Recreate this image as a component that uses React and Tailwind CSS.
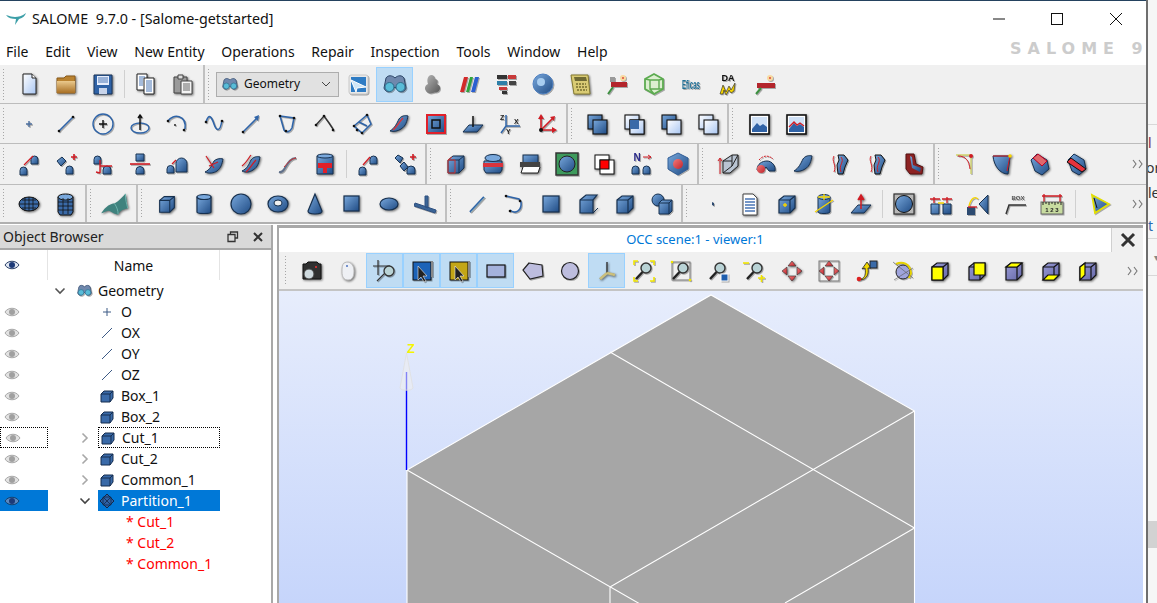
import React from 'react';

const dk = '#16304f';

const Ic = ({ s = 24, flat, children }) => (
    <svg width={s} height={s} viewBox="0 0 24 24" className={flat ? 'block drop-shadow-[1px_1px_0.5px_rgba(0,0,0,0.3)]' : 'block drop-shadow-[1px_1px_1px_rgba(0,0,0,0.55)]'}>
        {children}
    </svg>
);

// shared gradients, referenced by every icon
const Defs = () => (
    <svg width="0" height="0" className="block h-0 w-0">
        <defs>
            <linearGradient id="b" x1="0" y1="0" x2="1" y2="1"><stop offset="0" stopColor="#79a8dc" /><stop offset="1" stopColor="#1f4b84" /></linearGradient>
            <linearGradient id="doc" x1="0" y1="0" x2="1" y2="1"><stop offset="0" stopColor="#ffffff" /><stop offset="1" stopColor="#a9c6f2" /></linearGradient>
            <linearGradient id="tan" x1="0" y1="0" x2="0" y2="1"><stop offset="0" stopColor="#eac98d" /><stop offset="1" stopColor="#a86f24" /></linearGradient>
            <linearGradient id="red" x1="0" y1="0" x2="1" y2="1"><stop offset="0" stopColor="#f27a7a" /><stop offset="1" stopColor="#c0242c" /></linearGradient>
            <linearGradient id="gr" x1="0" y1="0" x2="1" y2="1"><stop offset="0" stopColor="#b8b8b8" /><stop offset="1" stopColor="#555555" /></linearGradient>
            <linearGradient id="vi" x1="0" y1="0" x2="1" y2="1"><stop offset="0" stopColor="#9a9cd6" /><stop offset="1" stopColor="#6567a8" /></linearGradient>
        </defs>
    </svg>
);

const Dot = ({ x, y, r = 1.3, c = '#111' }) => <circle cx={x} cy={y} r={r} fill={c} />;
const Blob = ({ x, y, w = 7, h = 9 }) => <path d={`M${x} ${y + h}v-${h / 2}a${w / 2} ${w / 2} 0 0 1 ${w} 0v${h / 2}z`} fill="url(#b)" stroke={dk} />;
const Cube = ({ f = 'url(#b)', top, side, st = dk, inner }) => (
    <g stroke={st} strokeWidth="1.2">
        <path d="M4 8l5-4h11v12l-5 5H4z" fill={f} />
        {top && <path d="M4 8l5-4h11l-5 4z" fill={top} />}
        {side && <path d="M15 8l5-4v12l-5 5z" fill={side} />}
        <path d="M4 8h11v13M15 8l5-4" fill="none" />
        {inner}
    </g>
);
const Line = ({ d, c = '#2f64a8', w = 1.6 }) => <path d={d} fill="none" stroke={c} strokeWidth={w} />;
const Squares = ({ a = 'url(#b)', b = 'url(#b)' }) => (
    <g stroke="#111" strokeWidth="1.1">
        <rect x="3" y="3" width="14" height="14" fill={a} />
        <rect x="8" y="8" width="14" height="14" fill={b} />
    </g>
);
const Scope = () => (
    <g>
        <circle cx="14" cy="9" r="5" fill="#b9d3d6" stroke="#333" strokeWidth="1.4" />
        <path d="M10.5 13L4 20" stroke="#222" strokeWidth="2.4" />
    </g>
);
const Arrows = () => (
    <g fill="url(#red)" stroke="#333" strokeWidth=".6">
        <path d="M12 2l4 5h-8z" /><path d="M12 22l4-5h-8z" /><path d="M2 12l5-4v8z" /><path d="M22 12l-5-4v8z" />
    </g>
);
const GeomLogo = ({ s = 24 }) => (
    <Ic s={s} flat>
        <path d="M3 6c2-3 6-3 9 0 3-3 7-3 9 0l2 10c-1 4-6 5-8 2l-3-3-3 3c-2 3-7 2-8-2z" fill="#6f88ad" stroke="#2b4466" />
        <circle cx="6.500" cy="15" r="4.500" fill="#58bcd8" stroke="#2f6a88" />
        <circle cx="17.500" cy="15" r="4.500" fill="#58bcd8" stroke="#2f6a88" />
    </Ic>
);

const I = {
    new: <Ic><path d="M6 2h9l4 4v16H6z" fill="url(#doc)" stroke="#222" /><path d="M15 2v4h4" fill="#fff" stroke="#222" /></Ic>,
    open: <Ic><path d="M3 6h7l2-2h9v17H3z" fill="#b98230" stroke="#8a5a1a" /><path d="M3 9h18v12H3z" fill="url(#tan)" /></Ic>,
    save: <Ic><path d="M3 3h18v19H3z" fill="#2f62a6" stroke="#1b3558" /><rect x="6" y="4" width="12" height="9" fill="#e7eefc" /><path d="M7 6h10M7 8h10M7 10h10" stroke="#4a76b5" /><rect x="8" y="16" width="8" height="6" fill="#c8d4ea" /></Ic>,
    copy: <Ic><path d="M3 2h10v16H3z" fill="#fff" stroke="#222" /><path d="M10 6h10v16H10z" fill="#fff" stroke="#222" /><path d="M12 9h6M12 11h6M12 13h6M12 15h6M12 17h6M12 19h6" stroke="#4a76b5" /><path d="M5 5h6M5 7h4M5 9h4M5 11h4M5 13h4" stroke="#4a76b5" /></Ic>,
    paste: <Ic><path d="M3 5h13v16H3z" fill="#9a9a9a" stroke="#444" /><path d="M7 3h5v4H7z" fill="#ddd" stroke="#444" /><path d="M10 9h11v13H10z" fill="#f4f4f4" stroke="#444" /><path d="M12 12h7M12 14h7M12 16h7M12 18h7" stroke="#666" /></Ic>,
    shaper: <Ic flat><rect x="3" y="3" width="19" height="19" rx="2" fill="#e8e8e8" stroke="#c8c8c8" /><rect x="5" y="5" width="15" height="15" fill="#2f7cc4" /><path d="M5 8l15 7-9 1-1 4z" fill="#cfe6f7" stroke="#fff" /></Ic>,
    geom: <GeomLogo />,
    smesh: <Ic flat><path d="M9 4c2-2 6-1 6 3 3 0 3 3 2 5 3 1 4 4 2 7-2 2-4 1-6 2-3 1-6 0-7-2-2-2-1-6 2-7-1-2-1-6 1-8z" fill="url(#gr)" /></Ic>,
    para: <Ic flat><path d="M3 20L7 5h4L7 20z" fill="#d22a2a" /><path d="M9 20l4-15h3l-4 15z" fill="#2fa33c" /><path d="M14 20l4-15h4l-4 15z" fill="#2b5fd0" /></Ic>,
    yacs: <Ic flat><rect x="3" y="3" width="10" height="4" fill="#333" /><rect x="14" y="3" width="8" height="4" fill="#c83a3a" /><rect x="3" y="9" width="10" height="4" fill="#2e7fa8" /><rect x="15" y="9" width="7" height="4" fill="#444" /><rect x="5" y="15" width="8" height="3" fill="#c83a3a" /><rect x="8" y="19" width="5" height="3" fill="#333" /></Ic>,
    globe: <Ic flat><circle cx="12" cy="12" r="10" fill="url(#b)" stroke="#4d7fc0" /><circle cx="10" cy="10" r="4" fill="#a8cdf0" /></Ic>,
    calc: <Ic><path d="M3 3h17l2 19H6z" fill="#d9cb74" stroke="#847a30" /><path d="M6 5h12l1 4H7z" fill="#6f6a34" /><path d="M8 12h10M8 15h11M9 18h10" stroke="#8f8540" strokeDasharray="2 1" strokeWidth="2" /></Ic>,
    field: <Ic flat><path d="M6 10h16v5H6z" fill="#b3252c" /><path d="M5 5h5v5H5z" fill="#999" /><path d="M8 15L3 22" stroke="#3c9040" strokeWidth="2" /><circle cx="18" cy="6" r="3" fill="#f7d9a0" /><circle cx="18" cy="6" r="1" fill="#e24a3a" /></Ic>,
    wire: <Ic flat><path d="M12 2l9 5v10l-9 5-9-5V7z" fill="#dcefd0" stroke="#5cab50" strokeWidth="1.8" /><path d="M8 8h9v9H8zM3 7l5 1M21 17l-4 0M8 17l4 5M17 8l4-1" fill="none" stroke="#5cab50" strokeWidth="1.4" /></Ic>,
    eficas: <Ic flat><text x="3" y="17" fontFamily="'Liberation Sans',sans-serif" fontSize="12" fontWeight="700" fill="#1f6f96" textLength="18" lengthAdjust="spacingAndGlyphs">Eficas</text></Ic>,
    dna: <Ic flat><text x="12" y="9" textAnchor="middle" fontFamily="'Liberation Sans',sans-serif" fontSize="9" fontWeight="700" fill="#111">DA</text><path d="M4 22l3-9 3 7 3-6 2 4 4-7-1 8-3 2-2-3-3 5-2-5-1 4z" fill="#f6d500" stroke="#222" strokeWidth=".6" /></Ic>,
    field2: <Ic flat><path d="M4 11h18v5H4z" fill="#b3252c" /><path d="M8 16L3 22" stroke="#3c9040" strokeWidth="2" /><circle cx="17" cy="6" r="3" fill="#f7d9a0" /><circle cx="17" cy="6" r="1" fill="#e24a3a" /></Ic>,

    point: <Ic flat><path d="M12 9v6M9 12h6" stroke="#4c6f9f" strokeWidth="1.4" /></Ic>,
    line: <Ic flat><Line d="M5 19L19 5" /><Dot x={5} y={19} /><Dot x={19} y={5} /></Ic>,
    circle: <Ic flat><circle cx="12" cy="12" r="10" fill="none" stroke="#2f64a8" strokeWidth="1.4" /><path d="M12 8v8M8 12h8" stroke="#111" strokeWidth="1.4" /></Ic>,
    ellipse: <Ic flat><ellipse cx="12" cy="16" rx="9" ry="5" fill="none" stroke="#2f64a8" strokeWidth="1.4" /><path d="M12 4v14M10 6l2-3 2 3" fill="none" stroke="#111" strokeWidth="1.4" /></Ic>,
    arc: <Ic flat><Line d="M3 9C8 1 22 3 20 17" /><Dot x={3} y={9} /><Dot x={19} y={18} /><Dot x={10} y={13} r={.9} /></Ic>,
    spline: <Ic flat><Line d="M4 10C7 0 10 6 12 12s6 10 8-4" /><Dot x={4} y={10} /><Dot x={20} y={9} /></Ic>,
    vector: <Ic flat><Line d="M4 20L19 5" /><path d="M20 3l-1 6-4-4z" fill="#2f64a8" /><Dot x={4} y={20} /></Ic>,
    wire1: <Ic flat><Line d="M4 4l14 2-2 10c-2 4-6 5-8 2z" /><Dot x={4} y={4} /><Dot x={18} y={6} /><Dot x={10} y={19} /></Ic>,
    poly: <Ic flat><path d="M3 13l8-9 5 7 4 6" fill="none" stroke="#333" strokeWidth="1.4" /><Dot x={3} y={13} /><Dot x={11} y={4} /><Dot x={20} y={18} /></Ic>,
    sketch: <Ic flat><Line d="M4 14L17 3l4 9-9 9zM9 10l8 4" /><Dot x={4} y={14} /><Dot x={17} y={3} /><Dot x={12} y={21} /><Dot x={7} y={18} /></Ic>,
    surf: <Ic><path d="M3 19c5-3 7-8 9-12 2-3 6-4 9-3-1 5-2 10-7 13-3 2-7 3-11 2z" fill="url(#b)" stroke={dk} /><path d="M6 18c4-3 6-8 10-12" stroke="#d8333c" fill="none" strokeWidth="1.4" /></Ic>,
    face: <Ic flat><rect x="3" y="3" width="18" height="18" fill="url(#b)" stroke="#e0202a" strokeWidth="2" /><rect x="8" y="8" width="8" height="8" fill="none" stroke="#111" strokeWidth="1.5" /></Ic>,
    plane: <Ic><path d="M2 20l6-7h14l-6 7z" fill="url(#b)" stroke={dk} /><path d="M12 4v11" stroke="#111" strokeWidth="1.5" /></Ic>,
    lcs: <Ic flat><path d="M8 14V3M8 14h14M8 14L3 21" stroke="#2f64a8" strokeWidth="1.5" /><text x="2" y="8" fontSize="7" fontFamily="'Liberation Sans',sans-serif" fontWeight="700" fill="#222">Z</text><text x="16" y="12" fontSize="7" fontFamily="'Liberation Sans',sans-serif" fontWeight="700" fill="#222">X</text><text x="8" y="22" fontSize="7" fontFamily="'Liberation Sans',sans-serif" fontWeight="700" fill="#222">Y</text></Ic>,
    axes: <Ic flat><path d="M6 18V5M6 18h14M6 18L18 6" stroke="#d01c24" strokeWidth="1.6" fill="none" /><path d="M6 2l-3 5h6zM22 18l-5-3v6zM20 4l-5 1 4 4z" fill="#d01c24" /><Dot x={6} y={18} r={2} /></Ic>,
    fuse: <Ic><Squares /></Ic>,
    common: <Ic><Squares a="url(#doc)" b="url(#b)" /><rect x="8" y="8" width="14" height="14" fill="url(#doc)" stroke="#111" /><rect x="8" y="8" width="9" height="9" fill="#3a6aa8" /></Ic>,
    cut: <Ic><Squares a="url(#b)" b="url(#doc)" /></Ic>,
    sect: <Ic><Squares a="url(#doc)" b="url(#doc)" /></Ic>,
    pic1: <Ic><rect x="3" y="3" width="19" height="19" fill="#fff" stroke="#111" strokeWidth="1.6" /><rect x="5" y="5" width="15" height="15" fill="#cfe0f5" /><path d="M5 17l5-6 3 3 3-2 4 3v5H5z" fill="#2f62a6" /></Ic>,
    pic2: <Ic><rect x="3" y="3" width="19" height="19" fill="#fff" stroke="#111" strokeWidth="1.6" /><rect x="5" y="5" width="15" height="15" fill="#cfe0f5" /><path d="M5 17l5-6 3 3 3-2 4 3v5H5z" fill="#2f62a6" /><path d="M5 15l5-5 3 3 3-2 4 3" stroke="#d01c24" fill="none" strokeWidth="1.4" /></Ic>,

    move: <Ic flat><Blob x={3} y={14} /><Blob x={14} y={3} /><path d="M7 13L16 4" stroke="#d01c24" strokeWidth="1.2" /></Ic>,
    scale: <Ic flat><path d="M3 9l5-4 4 4-5 5z" fill="url(#b)" stroke={dk} /><Blob x={12} y={13} /><path d="M17 5h6M20 2v6" stroke="#d01c24" strokeWidth="1.6" /></Ic>,
    rota: <Ic flat><Blob x={3} y={3} /><Blob x={12} y={14} w={8} h={8} /><path d="M9 14h12M9 8v13M5 20l4 1" stroke="#d01c24" strokeWidth="1.4" fill="none" /></Ic>,
    mirror: <Ic flat><path d="M8 2h8v7H8z" fill="url(#b)" stroke={dk} /><path d="M2 12h20" stroke="#d01c24" strokeWidth="1.6" /><Blob x={8} y={15} w={8} h={7} /></Ic>,
    offs: <Ic flat><Blob x={2} y={13} w={7} h={8} /><Blob x={11} y={3} w={11} h={17} /><path d="M7 12l4-4" stroke="#d01c24" strokeWidth="1.2" /></Ic>,
    proj: <Ic><path d="M3 20c5-2 7-7 9-11 2-2 6-3 9-2-1 5-2 9-6 12-3 2-8 3-12 1z" fill="url(#b)" stroke={dk} /><path d="M4 4l8 12M7 14l9-4" stroke="#d01c24" fill="none" strokeWidth="1.2" /></Ic>,
    extr: <Ic><path d="M3 19c5-2 7-7 9-11 2-3 6-4 9-3-1 5-2 10-7 13-3 2-7 3-11 1z" fill="url(#b)" stroke={dk} /><path d="M3 14c4-3 6-7 9-11M7 20c4-3 6-8 10-12" stroke="#d01c24" fill="none" strokeWidth="1.2" /></Ic>,
    curve: <Ic flat><path d="M3 20c7 2 7-14 17-14" fill="none" stroke="#60708a" strokeWidth="2" /><path d="M8 15c3-3 6-8 12-9" fill="none" stroke="#c33" strokeWidth="1" /></Ic>,
    drum: <Ic><path d="M4 4h16v18H4z" fill="url(#b)" stroke={dk} /><ellipse cx="12" cy="4" rx="8" ry="2" fill="#79a8dc" stroke={dk} /><path d="M5 11h14v5h-5v5h-4v-5H5z" fill="#e0202a" /></Ic>,
    move2: <Ic flat><Blob x={3} y={14} /><Blob x={14} y={3} /><path d="M7 13L14 5" stroke="#d01c24" strokeWidth="1.4" /></Ic>,
    multi: <Ic flat><path d="M2 6l3-3 5 3-3 5z" fill="url(#b)" stroke={dk} /><path d="M7 14l4-4 4 5-4 4z" fill="url(#b)" stroke={dk} /><Blob x={14} y={14} w={8} h={8} /><path d="M17 5h6M20 2v6" stroke="#d01c24" strokeWidth="1.6" /></Ic>,
    ccube: <Ic><path d="M4 8l5-4h11v12l-5 5H4z" fill="url(#b)" stroke={dk} /><path d="M4 8h11v13M15 8l5-4" stroke={dk} fill="none" /><path d="M4 8h7v13H4zM4 8l4-3" stroke="#c33" fill="none" /></Ic>,
    cfuse: <Ic><path d="M3 9h18v9l-2 3H5l-2-3z" fill="url(#b)" stroke={dk} /><ellipse cx="12" cy="6" rx="8" ry="3.5" fill="#79a8dc" stroke={dk} /><rect x="2" y="11" width="20" height="4" fill="#d8333c" /></Ic>,
    cut3: <Ic><rect x="5" y="3" width="15" height="10" fill="url(#b)" stroke={dk} /><rect x="2" y="10" width="20" height="5" fill="#444" /><path d="M5 15l-2 6h17l2-6" fill="#fff" stroke="#222" /></Ic>,
    glue: <Ic flat><rect x="1" y="1" width="22" height="22" fill="#3d9a5c" stroke="#333" strokeWidth="1.5" /><circle cx="12" cy="12" r="8" fill="url(#b)" stroke="#222" /></Ic>,
    sqred: <Ic><rect x="3" y="3" width="14" height="14" fill="#fff" stroke="#111" /><rect x="8" y="8" width="14" height="14" fill="#fff" stroke="#111" /><rect x="8" y="8" width="9" height="9" fill="#ff0000" stroke="#111" /></Ic>,
    normal: <Ic flat><text x="8" y="9" fontSize="10" fontFamily="'Liberation Sans',sans-serif" fontWeight="700" textAnchor="middle" fill="#2c2c8c">N</text><path d="M14 5h8M19 3l3 2-3 2" stroke="#d01c24" fill="none" /><Blob x={3} y={13} w={7} h={9} /><Blob x={14} y={13} w={7} h={9} /></Ic>,
    hex: <Ic flat><path d="M12 1l10 5v11l-10 6L2 17V6z" fill="url(#b)" stroke="#315e97" /><circle cx="12" cy="12" r="5" fill="url(#red)" /></Ic>,
    split: <Ic><path d="M6 9l9-6h6v11l-8 7H6z" fill="#b9c4d2" stroke="#222" /><path d="M6 9h9M15 3v11l-9 7M15 14l6-11" stroke="#222" fill="none" /><path d="M3 22V7M1 9l2-3 2 3" stroke="#d01c24" fill="none" /></Ic>,
    chull: <Ic flat><path d="M3 18c0-6 5-9 10-9s9 5 8 10h-6l-3-4-3 4z" fill="url(#b)" stroke={dk} /><circle cx="7" cy="17" r="4" fill="url(#red)" /><path d="M5 8c4-5 10-5 14-1" stroke="#d01c24" fill="none" strokeDasharray="2 1" /></Ic>,
    shell: <Ic><path d="M3 19c5-3 7-8 9-12 2-3 6-4 9-3-1 5-2 10-7 13-3 2-7 3-11 2z" fill="url(#b)" stroke={dk} /></Ic>,
    tube: <Ic flat><path d="M10 3h6l4 5-3 7-2 7h-5l-1-9 2-5z" fill="url(#b)" stroke="#111" /><path d="M13 5c4 5-3 8 0 15" stroke="#d01c24" fill="none" /><path d="M6 4c-3 5 3 9 0 16" stroke="#d01c24" fill="none" /></Ic>,
    l: <Ic><path d="M4 2h8l2 10 7 3-1 7-12 0-4-5z" fill="#8d2222" stroke="#511" /><path d="M8 4l2 12 8 4 1-4-8-3-1-8z" fill="url(#b)" /></Ic>,
    fillet: <Ic flat><path d="M3 3h15c0 8 0 12 0 19" fill="none" stroke="#cfd26a" strokeWidth="1.4" /><path d="M5 4c8 0 11 5 12 13" fill="none" stroke="#d01c24" /><Dot x={18} y={4} r={2} c="#d01c24" /></Ic>,
    fil3d: <Ic><path d="M3 4h17l-2 18c-8 0-14-8-15-18z" fill="url(#b)" stroke={dk} /><path d="M3 4h16M20 4l-3 15" stroke="#d01c24" /><Dot x={20} y={4} r={1.8} c="#f6d500" /></Ic>,
    cham: <Ic><path d="M4 8l6-6 10 6 2 9-7 6-7-4z" fill="url(#b)" stroke={dk} /><path d="M6 6l5-4 9 7-5 5z" fill="#e0686c" stroke="#b02" /></Ic>,
    cham2: <Ic><path d="M4 8l6-6 10 6 2 9-7 6-7-4z" fill="url(#b)" stroke={dk} /><path d="M3 10l4-4 15 11-4 3z" fill="#e6323c" stroke="#111" /></Ic>,

    sphere2: <Ic><ellipse cx="12" cy="12" rx="10" ry="7" fill="#3a6aa8" stroke="#111" /><path d="M2 12h20M5 8h14M5 16h14M8 5v14M12 5v14M16 5v14" stroke="#111" strokeWidth=".8" /></Ic>,
    cyl2: <Ic><path d="M4 5h15v15l-2 3H6l-2-3z" fill="#3a6aa8" stroke="#111" /><ellipse cx="11.5" cy="5" rx="7.5" ry="3" fill="#79a8dc" stroke="#111" /><path d="M4 10h15M4 14h15M4 18h15M9 6v16M14 6v16" stroke="#111" strokeWidth=".8" /></Ic>,
    wave: <Ic s={29}><path d="M1 20c4-6 8-8 11-8 4-2 7-6 9-8 1 3 1 7 2 12-4 1-6 2-8 5-4 0-6-3-8-3-2 0-4 2-6 2z" fill="#3f827e" /><path d="M12 12c2 3 3 6 3 9M21 4c0 5 1 8 2 12" stroke="#6fb3ad" fill="none" strokeWidth=".8" /></Ic>,
    box: <Ic s={22}><Cube /></Ic>,
    cyl: <Ic><path d="M5 5v15c0 2 14 2 14 0V5z" fill="url(#b)" stroke={dk} strokeWidth="1.2" /><ellipse cx="12" cy="5" rx="7" ry="2.5" fill="#79a8dc" stroke={dk} strokeWidth="1.2" /></Ic>,
    sphere: <Ic><circle cx="12" cy="12" r="10" fill="url(#b)" stroke={dk} strokeWidth="1.2" /></Ic>,
    torus: <Ic><ellipse cx="12" cy="12" rx="10" ry="8" fill="url(#b)" stroke={dk} strokeWidth="1.2" /><ellipse cx="12" cy="11" rx="4" ry="3" fill="#f0f0f0" stroke={dk} /></Ic>,
    cone: <Ic><path d="M12 2L5 19c0 4 14 4 14 0z" fill="url(#b)" stroke={dk} strokeWidth="1.2" /></Ic>,
    rect: <Ic><rect x="4" y="4" width="15" height="15" fill="url(#b)" stroke={dk} strokeWidth="1.2" /></Ic>,
    disk: <Ic><ellipse cx="12" cy="12" rx="9" ry="6" fill="url(#b)" stroke={dk} strokeWidth="1.2" /></Ic>,
    tee: <Ic flat><path d="M1 11l21 7-1 3-9-3-6-2-6-2zM11 15V4h3v12z" fill="#3a6496" stroke="#2e5080" /></Ic>,
    edge: <Ic flat><path d="M5 20L19 5" stroke="#2f64a8" strokeWidth="2" /><path d="M6 20L20 5" stroke="#9bb" strokeWidth=".8" /></Ic>,
    wire2: <Ic flat><Line d="M4 4l13 3 2 3c1 8-5 13-11 8" /><Dot x={4} y={4} /><Dot x={18} y={9} /><Dot x={8} y={19} /></Ic>,
    face2: <Ic><rect x="4" y="4" width="16" height="16" fill="url(#b)" stroke={dk} strokeWidth="1.2" /></Ic>,
    shellc: <Ic><path d="M4 8l6-5h11l-4 5v13l-13 0z" fill="url(#b)" stroke={dk} strokeWidth="1.2" /><path d="M4 8h13M22 16l-5 5" stroke={dk} /></Ic>,
    solid: <Ic><Cube /></Ic>,
    comp: <Ic flat><circle cx="8" cy="8" r="6" fill="url(#b)" stroke={dk} /><path d="M9 11l3-3h10v11l-3 3H9z" fill="url(#b)" stroke={dk} /><path d="M9 11h10v11M19 11l3-3" fill="none" stroke={dk} /></Ic>,
    tiny: <Ic flat><path d="M11 10l2 1v3l-2-1z" fill="#2c4a70" /></Ic>,
    list: <Ic><path d="M5 2h10l4 4v17H5z" fill="#fff" stroke="#444" /><path d="M7 7h10M7 10h10M7 13h10M7 16h10M7 19h10" stroke="#4a76b5" strokeWidth="1.4" /></Ic>,
    boxpt: <Ic><Cube inner={<path d="M8 13h4M10 11v4" stroke="#f6d500" strokeWidth="1.4" />} /></Ic>,
    cylax: <Ic flat><path d="M6 5v15c0 2 12 2 12 0V5z" fill="url(#b)" stroke={dk} /><ellipse cx="12" cy="5" rx="6" ry="2.5" fill="#79a8dc" stroke={dk} /><path d="M3 20L21 8M6 5h12M12 2v6" stroke="#f6d500" strokeWidth="1.3" /></Ic>,
    planear: <Ic><path d="M2 21l7-8h13l-7 8z" fill="url(#b)" stroke={dk} /><path d="M12 17V4M9 8l3-5 3 5" stroke="#d01c24" strokeWidth="1.5" fill="#d01c24" /></Ic>,
    insp: <Ic><rect x="2" y="2" width="20" height="20" fill="#b8b8b8" stroke="#333" strokeWidth="1.2" /><circle cx="12" cy="12" r="8.5" fill="url(#b)" stroke="#111" /></Ic>,
    dist: <Ic flat><path d="M2 12h8v10H2zM14 12h8v10h-8z" fill="url(#b)" stroke={dk} /><path d="M1 7h10M13 7h10M5 5v6M18 5v6" stroke="#d01c24" strokeWidth="1.3" /><path d="M9 11h6" stroke="#f6d500" strokeWidth="1.5" /></Ic>,
    angle: <Ic flat><path d="M1 15h8v8H1z" fill="#2c4a70" /><path d="M13 12L22 3v19z" fill="url(#b)" stroke={dk} /><path d="M3 14c2-8 6-10 9-7" stroke="#f6d500" fill="none" strokeWidth="1.4" /><path d="M2 15h9" stroke="#d01c24" strokeWidth="1.4" /></Ic>,
    boxdim: <Ic flat><text x="15" y="8" fontSize="6" fontFamily="'Liberation Sans',sans-serif" fontWeight="700" textAnchor="middle" fill="#555">BOX</text><path d="M3 22l3-9h17" stroke="#333" strokeWidth="1.5" fill="none" /></Ic>,
    ruler: <Ic flat><path d="M2 4h20M4 2v10M20 2v10" stroke="#d01c24" strokeWidth="1.3" /><rect x="1" y="10" width="22" height="12" fill="#c8dca0" stroke="#666" /><path d="M3 10v3M6 10v2M9 10v3M12 10v2M15 10v3M18 10v2M21 10v3" stroke="#222" /><text x="12" y="20" fontSize="6" fontFamily="'Liberation Sans',sans-serif" fontWeight="700" textAnchor="middle" fill="#222">1 2 3</text></Ic>,
    tri: <Ic flat><path d="M5 3l17 9-14 9z" fill="url(#b)" stroke="#e3e000" strokeWidth="1.8" /><path d="M7 6l3 10" stroke="#111" /></Ic>,

    cam: <Ic><path d="M4 5h3l2-2h9l2 2h2v15H4z" fill="#303030" stroke="#111" /><circle cx="10" cy="15" r="5" fill="#cfdadf" stroke="#444" /><circle cx="17" cy="8" r="1" fill="#e33" /></Ic>,
    mouse: <Ic><path d="M8 4c6-3 10 2 10 8s-2 9-6 9-6-3-6-8c0-4 0-7 2-9z" fill="#eef0f4" stroke="#bbb" /><circle cx="11" cy="7" r="1" fill="#4c72c0" /></Ic>,
    zoomr: <Ic flat><path d="M0 7h17M5 1v15M4 22L14 12" stroke="#333" strokeWidth="1.2" fill="none" /><circle cx="16" cy="12" r="5" fill="#b9d3d6" stroke="#333" strokeWidth="1.3" /></Ic>,
    selb: <Ic flat><rect x="3" y="3" width="18" height="18" fill="#1c63b8" stroke="#111" /><path d="M21 2h2v16h-2" fill="#888" /><path d="M8 7v14l3-3 3 5 2-1-3-5h4z" fill="#222" stroke="#eee" strokeWidth=".6" /></Ic>,
    sely: <Ic flat><rect x="3" y="3" width="18" height="18" fill="#c3a616" stroke="#111" /><path d="M21 2h2v16h-2" fill="#888" /><path d="M8 7v14l3-3 3 5 2-1-3-5h4z" fill="#222" stroke="#eee" strokeWidth=".6" /></Ic>,
    srect: <Ic flat><rect x="3" y="6" width="18" height="12" fill="#a4b2dc" stroke="#111" strokeWidth="1.2" /></Ic>,
    spoly: <Ic flat><path d="M8 4l13 2 1 11-13 3-7-9z" fill="#bdbdde" stroke="#222" strokeWidth="1.2" /></Ic>,
    scirc: <Ic flat><circle cx="12" cy="12" r="8.5" fill="#bdbdde" stroke="#222" strokeWidth="1.2" /></Ic>,
    trihedron: <Ic><path d="M12 14V3M12 14l8 2M12 14l-7 6" stroke="#333" strokeWidth="1.4" /><path d="M12 14l8 2M12 14l-7 6" stroke="#cbbf7c" strokeWidth="2.4" /></Ic>,
    zfit: <Ic flat><path d="M2 6V2h4M22 6V2h-4M2 18v4h4M22 18v4h-4" stroke="#f2e600" strokeWidth="1.6" fill="none" /><Scope /></Ic>,
    zarea: <Ic flat><rect x="3" y="3" width="18" height="18" fill="none" stroke="#777" /><Scope /><Dot x={3} y={3} c="#f2e600" /><Dot x={21} y={21} c="#f2e600" /></Ic>,
    zobj: <Ic flat><Scope /><rect x="15" y="15" width="7" height="7" fill="#1f5fae" stroke="#fff" /></Ic>,
    zoom: <Ic flat><path d="M0 4h6" stroke="#f2e600" strokeWidth="1.6" /><Scope /><path d="M15 19h7M18.500 16v7" stroke="#f2e600" strokeWidth="1.6" /></Ic>,
    pan: <Ic><Arrows /></Ic>,
    pan2: <Ic flat><rect x="2" y="2" width="20" height="20" fill="none" stroke="#777" /><Arrows /></Ic>,
    rotv: <Ic flat><path d="M7 20c4-1 5-5 4-11l-3 1 5-7 4 6-3 0c1 6-1 11-7 12z" fill="#f2d800" stroke="#222" strokeWidth=".8" /><Dot x={5} y={20} r={2.3} c="#d22" /><rect x="16" y="2" width="7" height="7" fill="#3a6aa8" stroke="#222" /></Ic>,
    rots: <Ic flat><circle cx="12" cy="13" r="7" fill="#9fa4dc" stroke="#222" /><path d="M5 5c6-3 14-1 15 9l-2 5" stroke="#e6d200" strokeWidth="2" fill="none" /><path d="M2 3l20 16M22 9L3 21" stroke="#555" strokeWidth=".6" /></Ic>,
    vfront: <Ic><Cube f="url(#vi)" inner={<rect x="4" y="8" width="11" height="13" fill="#ffff00" stroke="#111" />} st="#111" /></Ic>,
    vback: <Ic><Cube f="url(#vi)" inner={<path d="M9 4h11v12H9z" fill="#ffff00" stroke="#111" />} st="#111" /></Ic>,
    vtop: <Ic><Cube f="url(#vi)" inner={<path d="M4 8l5-4h11l-5 4z" fill="#ffff00" />} st="#111" /></Ic>,
    vbot: <Ic><Cube f="url(#vi)" inner={<path d="M4 21l5-5h11l-5 5z" fill="#ffff00" />} st="#111" /></Ic>,
    vleft: <Ic><Cube f="url(#vi)" inner={<path d="M4 8l5-4v12l-5 5z" fill="#ffff00" />} st="#111" /></Ic>,
};

const Grip = ({ w = 'w-[10px]' }) => (
    <div className={`${w} shrink-0 self-stretch py-[3px] pl-[2px]`}>
        <div className="h-full w-[3px] bg-[radial-gradient(#a6a6a6_1px,transparent_1px)] bg-[length:3px_3px]" />
    </div>
);

const Cell = ({ name }) => {
    const on = name.endsWith('!');
    const icon = I[on ? name.slice(0, -1) : name];
    return (
        <div className={`flex h-[35px] w-[37px] shrink-0 items-center justify-center ${on ? 'border border-[#99d1ff] bg-[#bfdcf3]' : ''}`}>
            {icon}
        </div>
    );
};

const ThinSep = ({ w = 'w-[6px]' }) => (
    <div className={`${w} flex shrink-0 justify-center`}>
        <div className="h-[28px] w-px bg-[#d0d0d0]" />
    </div>
);

const Items = ({ list }) => list.map((n, i) => {
    if (n === '|') return <ThinSep key={i} />;
    if (n === '|w') return <ThinSep key={i} w="w-[10px]" />;
    return <Cell key={i} name={n} />;
});

const Group = ({ grip, items, width, last, children }) => (
    <div className={`flex h-full shrink-0 items-center ${width} ${last ? '' : 'border-r-2 border-[#c0c0c0]'}`}>
        <Grip w={grip} />
        {children}
        <Items list={items} />
    </div>
);

const More = () => (
    <svg width="12" height="10" viewBox="0 0 12 10" className="ml-auto mr-[2px] shrink-0">
        <path d="M1 1l3 4-3 4M7 1l3 4-3 4" fill="none" stroke="#777" strokeWidth="1.1" />
    </svg>
);

const Menu = ['File', 'Edit', 'View', 'New Entity', 'Operations', 'Repair', 'Inspection', 'Tools', 'Window', 'Help'];

const Eye = ({ dark, selected }) => (
    <svg width="16" height="12" viewBox="0 0 16 12">
        <path d="M1 6c3-5 11-5 14 0-3 5-11 5-14 0z" fill={dark ? '#dfe6f2' : selected ? '#5a88c0' : '#e2e2e2'} stroke={dark ? '#2a3f66' : selected ? '#12406e' : '#a8a8a8'} />
        <circle cx="8" cy="6" r="3" fill={dark ? '#1c3a78' : selected ? '#1c3a78' : '#a0a0a0'} />
    </svg>
);

const TreeIcon = ({ kind }) => {
    if (kind === 'geom') return <GeomLogo s={15} />;
    if (kind === 'point') return <svg width="14" height="14" viewBox="0 0 14 14"><path d="M7 3v8M3 7h8" stroke="#3d5a85" /></svg>;
    if (kind === 'line') return <svg width="14" height="14" viewBox="0 0 14 14"><path d="M2 12L12 2" stroke="#3d5a85" /></svg>;
    if (kind === 'part') return (
        <svg width="14" height="14" viewBox="0 0 14 14">
            <path d="M7 0l7 7-7 7-7-7z" fill="#2f62a6" stroke="#12284a" />
            <path d="M3 3h8v8H3zM3 3l8 8M11 3l-8 8" fill="none" stroke="#12284a" strokeWidth=".8" />
        </svg>
    );
    return (
        <svg width="14" height="14" viewBox="0 0 14 14">
            <path d="M1 5l3-3h9v7l-3 4H1z" fill="#3a6aa8" stroke="#152c4e" />
            <path d="M1 5h9v8M10 5l3-3" fill="none" stroke="#152c4e" />
        </svg>
    );
};

const Arrow = ({ open, dark }) => (
    <svg width="12" height="12" viewBox="0 0 12 12" className="shrink-0">
        {open
            ? <path d="M1.5 3.5L6 8l4.5-4.5" fill="none" stroke={dark ? '#444' : '#555'} strokeWidth="1.6" />
            : <path d="M3.5 1.5L8 6l-4.5 4.5" fill="none" stroke="#a8a8a8" strokeWidth="1.6" />}
    </svg>
);

const rows = [
    { name: 'O', icon: 'point', eye: true },
    { name: 'OX', icon: 'line', eye: true },
    { name: 'OY', icon: 'line', eye: true },
    { name: 'OZ', icon: 'line', eye: true },
    { name: 'Box_1', icon: 'box', eye: true },
    { name: 'Box_2', icon: 'box', eye: true },
    { name: 'Cut_1', icon: 'box', eye: true, closed: true, focus: true },
    { name: 'Cut_2', icon: 'box', eye: true, closed: true },
    { name: 'Common_1', icon: 'box', eye: true, closed: true },
    { name: 'Partition_1', icon: 'part', eye: true, open: true, sel: true },
];

const TreeRow = ({ row }) => {
    const mark = row.sel ? 'bg-[#0078d7] text-white' : row.focus ? 'border border-dotted border-black' : '';
    return (
        <div className="flex h-[21px] items-center">
            <div className={`flex h-full w-[48px] shrink-0 items-center pl-[4px] ${mark}`}>
                <Eye selected={row.sel} />
            </div>
            <div className="flex h-full w-[50px] shrink-0 items-center justify-end pr-[7px]">
                {row.closed && <Arrow />}
                {row.open && <Arrow open dark />}
            </div>
            <div className={`flex h-full w-[122px] shrink-0 items-center gap-[7px] pl-[2px] ${mark}`}>
                <TreeIcon kind={row.icon} />
                <span>{row.name}</span>
            </div>
        </div>
    );
};

const Tree = () => (
    <div className="flex w-[271px] shrink-0 flex-col bg-white text-[14px] text-[#111]">
        <div className="flex h-[23px] items-center justify-between bg-[#d9d9d9] pl-[3px] pr-[7px] text-[#222]">
            <span>Object Browser</span>
            <div className="flex items-center gap-[13px]">
                <svg width="12" height="12" viewBox="0 0 12 12"><path d="M3.5 3V1h7v6H8M1 3.500h7v7H1z" fill="none" stroke="#333" strokeWidth="1.3" /></svg>
                <svg width="12" height="12" viewBox="0 0 12 12"><path d="M2 2l8 8M10 2l-8 8" stroke="#333" strokeWidth="2" /></svg>
            </div>
        </div>
        <div className="h-[2px] bg-[#a8a8a8]" />
        <div className="flex h-[30px] shrink-0">
            <div className="flex w-[48px] items-center border-r border-[#e4e4e4] pl-[4px]"><Eye dark /></div>
            <div className="flex w-[172px] items-center justify-center border-r border-[#e4e4e4]">Name</div>
        </div>
        <div className="flex h-[21px] items-center">
            <div className="flex h-full w-[77px] shrink-0 items-center justify-end pr-[11px]"><Arrow open /></div>
            <div className="flex items-center gap-[6px]"><TreeIcon kind="geom" /><span>Geometry</span></div>
        </div>
        {rows.map(r => <TreeRow key={r.name} row={r} />)}
        {['Cut_1', 'Cut_2', 'Common_1'].map(n => (
            <div key={n} className="flex h-[21px] items-center pl-[126px] text-[#ff0000]">* {n}</div>
        ))}
    </div>
);

const Scene = () => (
    <svg className="block h-full w-full" viewBox="279 291 864 312">
        <path d="M711 295L914.500 411V603H407V470z" fill="#a6a6a6" />
        <g fill="none" stroke="#ffffff" strokeWidth="1.1">
            <path d="M407 603V470L711 295L914.500 411V603" />
            <path d="M407 470L640 604M610 587V603M610 587L914.500 411M610 352L914.500 528M914.500 528L785 603" />
        </g>
        <path d="M406.500 372V470" stroke="#0000ff" strokeWidth="1.4" />
        <path d="M406.500 353L400 388c1 3 12 3 13 0z" fill="#eeeeee" fillOpacity="0.55" stroke="#e0e0e0" strokeOpacity="0.8" />
        <text x="407" y="353" fontFamily="'Liberation Sans',sans-serif" fontWeight="700" fontSize="13" fill="#f5f500">Z</text>
    </svg>
);

const viewIcons = ['cam', 'mouse', 'zoomr!', 'selb!', 'sely!', 'srect!', 'spoly', 'scirc', 'trihedron!', 'zfit', 'zarea', 'zobj', 'zoom', 'pan', 'pan2', 'rotv', 'rots', 'vfront', 'vback', 'vtop', 'vbot', 'vleft'];

const Viewer = () => (
    <div className="flex min-w-0 flex-1 flex-col border-l-2 border-[#a8a8a8]">
        <div className="h-[3px] shrink-0 bg-[#a8a8a8]" />
        <div className="flex h-[24px] shrink-0 bg-[#f0f0f0]">
            <div className="flex w-[833px] shrink-0 items-center justify-center border-r border-[#d0d0d0] bg-white text-[13px] text-[#0078d7]">
                OCC scene:1 - viewer:1
            </div>
            <div className="flex flex-1 items-center justify-center">
                <svg width="16" height="16" viewBox="0 0 16 16"><path d="M2 2l12 12M14 2L2 14" stroke="#333" strokeWidth="3" /></svg>
            </div>
        </div>
        <div className="flex h-[39px] shrink-0 items-center border-b-2 border-[#c4c4c4] bg-[#f0f0f0] pl-[3px] pr-[2px]">
            <Grip />
            <Items list={viewIcons} />
            <More />
        </div>
        <div className="min-h-0 flex-1 overflow-hidden bg-gradient-to-b from-[#e7edfc] to-[#c6d5fb]">
            <Scene />
        </div>
    </div>
);

export default function App() {
    return (
        <div className="flex h-[603px] w-[1157px] overflow-hidden bg-white font-['Noto_Sans',sans-serif] text-[14px]">
            <Defs />
            <div className="flex w-[1146px] shrink-0 flex-col border-t border-[#24425f] bg-white">
                <div className="flex h-[36px] shrink-0 items-center pl-[6px] text-[14.3px] text-[#111]">
                    <svg width="20" height="12" viewBox="0 0 20 12" className="mr-[6px]"><path d="M0 2c4 1 6 2 9 2s7-1 11-4c-1 3-3 5-7 6L9 12l1-6C6 6 2 5 0 2z" fill="#3d9fa8" /></svg>
                    <span>SALOME&nbsp; 9.7.0 - [Salome-getstarted]</span>
                    <div className="ml-auto flex h-full">
                        <div className="flex w-[58px] items-center justify-center"><svg width="12" height="12" viewBox="0 0 12 12"><path d="M0 6h12" stroke="#111" /></svg></div>
                        <div className="flex w-[58px] items-center justify-center"><svg width="12" height="12" viewBox="0 0 12 12"><rect x=".5" y=".5" width="11" height="11" fill="none" stroke="#111" /></svg></div>
                        <div className="flex w-[60px] items-center justify-center"><svg width="12" height="12" viewBox="0 0 12 12"><path d="M0 0l12 12M12 0L0 12" stroke="#111" /></svg></div>
                    </div>
                </div>
                <div className="flex h-[27px] shrink-0 items-center gap-[16.75px] pl-[6px] pt-[2px] text-[#111]">
                    {Menu.map(m => <span key={m}>{m}</span>)}
                    <div className="mb-[6px] ml-auto w-[136px] overflow-hidden whitespace-nowrap font-['DejaVu_Sans',sans-serif] text-[16px] font-bold leading-[18px] tracking-[6px] text-[#cccccc]">SALOME 9</div>
                </div>
                <div className="flex h-[40px] shrink-0 border-y border-t-white border-b-[#bcbcbc] bg-[#f0f0f0]">
                    <Group items={['new', 'open', 'save', '|', 'copy', 'paste']} width="w-[205px]" />
                    <Group grip="w-[11px]" last width="flex-1" items={['shaper', 'geom!', 'smesh', 'para', 'yacs', 'globe', 'calc', 'field', 'wire', 'eficas', 'dna', 'field2']}>
                        <div className="flex h-[25px] w-[123px] shrink-0 items-center border border-[#adadad] bg-[#e1e1e1] pl-[5px] pr-[7px] text-[12px] text-[#111]">
                            <GeomLogo s={16} />
                            <span className="ml-[6px]">Geometry</span>
                            <svg width="10" height="6" viewBox="0 0 10 6" className="ml-auto"><path d="M1 1l4 4 4-4" fill="none" stroke="#444" /></svg>
                        </div>
                    </Group>
                </div>
                <div className="flex h-[40px] shrink-0 border-b border-[#bcbcbc] bg-[#f0f0f0]">
                    <Group width="w-[568px]" items={['point', 'line', 'circle', 'ellipse', 'arc', 'spline', 'vector', 'wire1', 'poly', 'sketch', 'surf', 'face', 'plane', 'lcs', 'axes']} />
                    <Group width="w-[161px]" items={['fuse', 'common', 'cut', 'sect']} />
                    <Group last width="flex-1" items={['pic1', 'pic2']} grip="w-[11px]" />
                </div>
                <div className="flex h-[41px] shrink-0 border-b border-[#bcbcbc] bg-[#f0f0f0]">
                    <Group width="w-[427px]" items={['move', 'scale', 'rota', 'mirror', 'offs', 'proj', 'extr', 'curve', 'drum', '|', 'move2', 'multi']} />
                    <Group width="w-[272px]" items={['ccube', 'cfuse', 'cut3', 'glue', 'sqred', 'normal', 'hex']} />
                    <Group width="w-[236px]" grip="w-[11px]" items={['split', 'chull', 'shell', 'tube', 'tube', 'l']} />
                    <Group last width="flex-1" grip="w-[11px]" items={['fillet', 'fil3d', 'cham', 'cham2']} />
                    <div className="-ml-[20px] flex items-center"><More /></div>
                </div>
                <div className="flex h-[39px] shrink-0 border-b-2 border-[#b0b0b0] bg-[#f0f0f0]">
                    <Group width="w-[87px]" items={['sphere2', 'cyl2']} />
                    <Group width="w-[51px]" grip="w-[9px]" items={['wave']} />
                    <Group width="w-[309px]" items={['box', 'cyl', 'sphere', 'torus', 'cone', 'rect', 'disk', 'tee']} />
                    <Group width="w-[236px]" grip="w-[11px]" items={['edge', 'wire2', 'face2', 'shellc', 'solid', 'comp']} />
                    <Group last width="flex-1" grip="w-[11px]" items={['tiny', 'list', 'boxpt', 'cylax', 'planear', '|', 'insp', 'dist', 'angle', 'boxdim', 'ruler', '|w', 'tri']} />
                    <div className="-ml-[20px] flex items-center"><More /></div>
                </div>
                <div className="flex min-h-0 flex-1 pt-px">
                    <Tree />
                    <div className="flex w-[6px] shrink-0"><div className="w-[2px] bg-[#a8a8a8]" /><div className="flex-1 bg-white" /></div>
                    <Viewer />
                    <div className="w-[3px] shrink-0 bg-white" />
                </div>
            </div>
            <div className="flex w-[11px] shrink-0 flex-col overflow-hidden border-l-2 border-[#6e6e6e] bg-[#f6f6f6] text-[14px]">
                <div className="h-[125px] shrink-0 border-b border-[#d8d8d8]" />
                <div className="h-[114px] shrink-0 border-b border-[#d8d8d8] pt-[5px] leading-[25px]">
                    <div className="text-[#7a2b50]">l</div>
                    <div className="-ml-[2px] text-[#333]">or</div>
                    <div className="text-[#333]">le</div>
                    <div className="mt-[8px] text-[#2a6ab0]">t</div>
                </div>
                <div className="h-[37px] shrink-0 border-b border-[#d8d8d8] pl-[6px] text-[10px] leading-[36px] text-[#888]">▾</div>
                <div className="h-[245px] shrink-0" />
                <div className="h-[27px] shrink-0 bg-[#d2d2d2]" />
            </div>
        </div>
    );
}
